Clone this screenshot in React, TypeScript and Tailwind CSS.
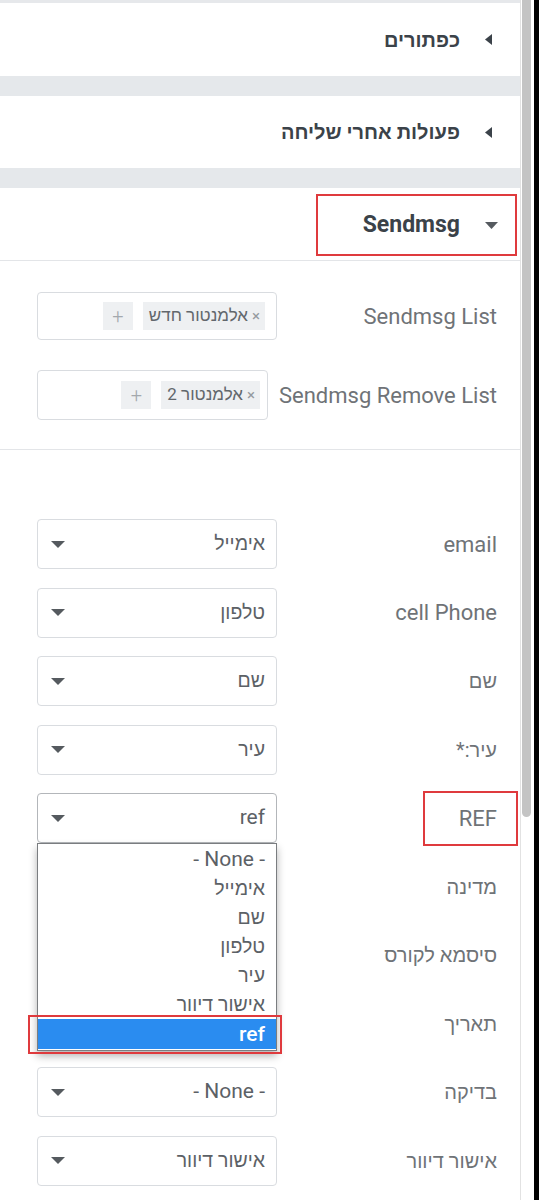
import React from "react"

const selectRows = [
  { label: "email", value: "אימייל" },
  { label: "cell Phone", value: "טלפון" },
  { label: "שם", value: "שם" },
  { label: "עיר:*", value: "עיר" },
  { label: "REF", value: "ref", open: true },
  { label: "מדינה", value: "" },
  { label: "סיסמא לקורס", value: "" },
  { label: "תאריך", value: "" },
  { label: "בדיקה", value: "- None -" },
  { label: "אישור דיוור", value: "אישור דיוור" },
]

const options = ["- None -", "אימייל", "שם", "טלפון", "עיר", "אישור דיוור", "ref"]

// hebrew runs in a smaller size than the latin ones
const isHebrew = (s: string) => /[\u0590-\u05ff]/.test(s)

function Caret() {
  return (
    <svg width="14" height="7" viewBox="0 0 14 7">
      <path d="M0 0 L14 0 L7 7 Z" fill="#555a5f" />
    </svg>
  )
}

function SectionTitle({ title, height }: { title: string; height: string }) {
  return (
    <div className={`flex items-center gap-[25px] bg-white pr-[28px] ${height}`}>
      <svg width="7" height="11" viewBox="0 0 7 11">
        <path d="M7 0 L7 11 L0 5.5 Z" fill="#3b4249" />
      </svg>
      <span className="text-[20px] font-bold text-[#3b4249]">{title}</span>
    </div>
  )
}

function TagBox({ label, tag, width, height, pad }: { label: string; tag: string; width: string; height: string; pad: string }) {
  return (
    <div className="flex items-center justify-between pl-[37px] pr-[23px]">
      <span className="text-[22px] text-[#6f7377] whitespace-nowrap">{label}</span>
      <div className={`flex items-center gap-[10px] rounded-[4px] border border-[#d9dce0] ${width} ${height} ${pad}`}>
        <div className="flex h-[28px] items-center gap-[4px] bg-[#eef0f2] pl-[6px] pr-[5px]">
          <span className="text-[15px] text-[#959a9f]">×</span>
          <span className="text-[17px] text-[#62676c]">{tag}</span>
        </div>
        <div className="flex h-[28px] w-[30px] items-center justify-center bg-[#eef0f2] text-[20px] font-light text-[#a3a8ad]">
          +
        </div>
      </div>
    </div>
  )
}

export default function App() {
  return (
    <div className="flex h-[1200px] w-[539px] overflow-hidden bg-white font-['Roboto','Liberation_Sans',sans-serif]">
      <div dir="rtl" className="flex flex-1 flex-col">
        <div className="h-[3px] bg-[#e6e8eb]" />
        <SectionTitle title="כפתורים" height="h-[73px]" />
        <div className="h-[20px] bg-[#e5e8eb]" />
        <SectionTitle title="פעולות אחרי שליחה" height="h-[72px]" />
        <div className="h-[20px] bg-[#e5e8eb]" />

        <div className="flex h-[73px] items-start border-b border-[#e3e5e8] pr-[3px] pt-[6px]">
          <div className="flex h-[62px] w-[201px] items-center gap-[25px] border-2 border-[#df3a3d] pr-[17px]">
            <svg width="13" height="7" viewBox="0 0 13 7">
              <path d="M0 0 L13 0 L6.5 7 Z" fill="#555a5f" />
            </svg>
            <span className="text-[23px] font-bold text-[#3b4249]">Sendmsg</span>
          </div>
        </div>

        <div className="flex flex-col gap-[30px] border-b border-[#e3e5e8] pb-[29px] pt-[31px]">
          <TagBox label="Sendmsg List" tag="אלמנטור חדש" width="w-[240px]" height="h-[48px]" pad="pr-[11px]" />
          <TagBox label="Sendmsg Remove List" tag="אלמנטור 2" width="w-[231px]" height="h-[50px]" pad="pr-[7px]" />
        </div>

        <div className="flex flex-col gap-[18.5px] pt-[69px]">
          {selectRows.map((row) => (
            <div key={row.label} className="flex h-[50px] items-center justify-between pl-[37px] pr-[2px]">
              {row.open ? (
                <div className="flex h-[55px] w-[95px] items-center border-2 border-[#df3a3d] pr-[19px]">
                  <span className="text-[22px] text-[#6f7377]">{row.label}</span>
                </div>
              ) : (
                <span
                  className={`pr-[21px] text-[#6f7377] whitespace-nowrap ${
                    isHebrew(row.label) ? "text-[20px]" : "text-[22px]"
                  }`}
                >
                  {row.label}
                </span>
              )}
              <div className="relative">
                <div
                  className={`flex h-[50px] w-[240px] items-center justify-between rounded-[4px] border pl-[13px] pr-[11px] ${
                    row.open ? "border-[#b3b6ba]" : "border-[#d9dce0]"
                  }`}
                >
                  <span className={`text-[#5c6166] ${isHebrew(row.value) ? "text-[19.5px]" : "text-[21px]"}`}>
                    {row.value}
                  </span>
                  <Caret />
                </div>
                {row.open && (
                  <div className="absolute left-0 top-[50px] z-10 h-[208px] w-[240px] border border-[#7a7d80] bg-white pt-[1px] shadow-[0_5px_8px_rgba(0,0,0,0.3)]">
                    {options.map((opt) =>
                      opt === "ref" ? (
                        <div key={opt} className="relative h-[30px] bg-[#2a8cf0] pr-[11px] text-[21px] font-medium leading-[30px] text-white">
                          {opt}
                          <div className="absolute -bottom-[5px] -left-[10px] -right-[6px] -top-[4px] border-2 border-[#df3a3d]" />
                        </div>
                      ) : (
                        <div
                          key={opt}
                          className={`h-[29px] pr-[11px] leading-[29px] text-[#5c6166] ${
                            isHebrew(opt) ? "text-[19.5px]" : "text-[21px]"
                          }`}
                        >
                          {opt}
                        </div>
                      )
                    )}
                  </div>
                )}
              </div>
            </div>
          ))}
        </div>
      </div>

      <div className="flex w-[14px] border-l border-[#e2e2e2] bg-white pl-[1px]">
        <div className="h-[817px] w-[9px] rounded-b-full bg-[#c4c4c4]" />
      </div>
      <div className="w-[5px] bg-black" />
    </div>
  )
}
